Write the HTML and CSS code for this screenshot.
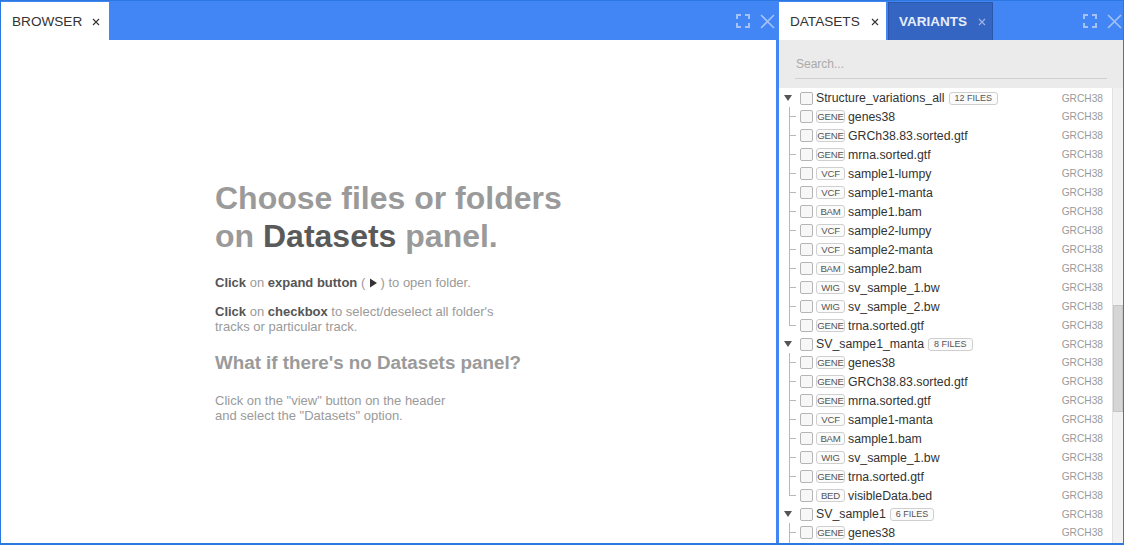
FILE: index.html
```html
<!DOCTYPE html>
<html>
<head>
<meta charset="utf-8">
<link rel="stylesheet" href="styles.css">
</head>
<body>
<div class="app">
  <section class="panel panel-left">
    <header class="bar">
      <div class="tab active">BROWSER<svg class="tx" viewBox="0 0 8 8"><path d="M1 1L7 7M7 1L1 7"/></svg></div>
      <div class="tools">
        <svg class="ico" viewBox="0 0 14 14"><path d="M1 5V1H5M9 1H13V5M13 9V13H9M5 13H1V9"/></svg>
        <svg class="ico close" viewBox="0 0 15 15"><path d="M1 1L14 14M14 1L1 14"/></svg>
      </div>
    </header>
    <div class="browser-body">
      <div class="help">
        <h1>Choose files or folders<br>on <b>Datasets</b> panel.</h1>
        <p><b>Click</b> on <b>expand button</b> ( <svg class="play" viewBox="0 0 8 10"><path d="M1 0.5L8 5L1 9.5Z"/></svg> ) to open folder.</p>
        <p><b>Click</b> on <b>checkbox</b> to select/deselect all folder's<br>tracks or particular track.</p>
        <h2>What if there's no Datasets panel?</h2>
        <p>Click on the "view" button on the header<br>and select the "Datasets" option.</p>
      </div>
    </div>
  </section>
  <section class="panel panel-right">
    <header class="bar">
      <div class="tab active">DATASETS<svg class="tx" viewBox="0 0 8 8"><path d="M1 1L7 7M7 1L1 7"/></svg></div>
      <div class="tab dark">VARIANTS<svg class="tx" viewBox="0 0 8 8"><path d="M1 1L7 7M7 1L1 7"/></svg></div>
      <div class="tools">
        <svg class="ico" viewBox="0 0 14 14"><path d="M1 5V1H5M9 1H13V5M13 9V13H9M5 13H1V9"/></svg>
        <svg class="ico close" viewBox="0 0 15 15"><path d="M1 1L14 14M14 1L1 14"/></svg>
      </div>
    </header>
    <div class="search"><div class="search-input">Search...</div></div>
    <div class="list-wrap">
      <div class="tree">
        <div class="row folder"><svg class="caret" viewBox="0 0 8 6"><path d="M0 0H8L4 6Z"/></svg><span class="cb"></span><span class="name">Structure_variations_all</span><span class="count">12 FILES</span><span class="ref">GRCH38</span></div>
        <div class="row file"><span class="branch"></span><span class="cb"></span><span class="tag">GENE</span><span class="name">genes38</span><span class="ref">GRCH38</span></div>
        <div class="row file"><span class="branch"></span><span class="cb"></span><span class="tag">GENE</span><span class="name">GRCh38.83.sorted.gtf</span><span class="ref">GRCH38</span></div>
        <div class="row file"><span class="branch"></span><span class="cb"></span><span class="tag">GENE</span><span class="name">mrna.sorted.gtf</span><span class="ref">GRCH38</span></div>
        <div class="row file"><span class="branch"></span><span class="cb"></span><span class="tag">VCF</span><span class="name">sample1-lumpy</span><span class="ref">GRCH38</span></div>
        <div class="row file"><span class="branch"></span><span class="cb"></span><span class="tag">VCF</span><span class="name">sample1-manta</span><span class="ref">GRCH38</span></div>
        <div class="row file"><span class="branch"></span><span class="cb"></span><span class="tag">BAM</span><span class="name">sample1.bam</span><span class="ref">GRCH38</span></div>
        <div class="row file"><span class="branch"></span><span class="cb"></span><span class="tag">VCF</span><span class="name">sample2-lumpy</span><span class="ref">GRCH38</span></div>
        <div class="row file"><span class="branch"></span><span class="cb"></span><span class="tag">VCF</span><span class="name">sample2-manta</span><span class="ref">GRCH38</span></div>
        <div class="row file"><span class="branch"></span><span class="cb"></span><span class="tag">BAM</span><span class="name">sample2.bam</span><span class="ref">GRCH38</span></div>
        <div class="row file"><span class="branch"></span><span class="cb"></span><span class="tag">WIG</span><span class="name">sv_sample_1.bw</span><span class="ref">GRCH38</span></div>
        <div class="row file"><span class="branch"></span><span class="cb"></span><span class="tag">WIG</span><span class="name">sv_sample_2.bw</span><span class="ref">GRCH38</span></div>
        <div class="row file last"><span class="branch"></span><span class="cb"></span><span class="tag">GENE</span><span class="name">trna.sorted.gtf</span><span class="ref">GRCH38</span></div>
        <div class="row folder"><svg class="caret" viewBox="0 0 8 6"><path d="M0 0H8L4 6Z"/></svg><span class="cb"></span><span class="name">SV_sampe1_manta</span><span class="count">8 FILES</span><span class="ref">GRCH38</span></div>
        <div class="row file"><span class="branch"></span><span class="cb"></span><span class="tag">GENE</span><span class="name">genes38</span><span class="ref">GRCH38</span></div>
        <div class="row file"><span class="branch"></span><span class="cb"></span><span class="tag">GENE</span><span class="name">GRCh38.83.sorted.gtf</span><span class="ref">GRCH38</span></div>
        <div class="row file"><span class="branch"></span><span class="cb"></span><span class="tag">GENE</span><span class="name">mrna.sorted.gtf</span><span class="ref">GRCH38</span></div>
        <div class="row file"><span class="branch"></span><span class="cb"></span><span class="tag">VCF</span><span class="name">sample1-manta</span><span class="ref">GRCH38</span></div>
        <div class="row file"><span class="branch"></span><span class="cb"></span><span class="tag">BAM</span><span class="name">sample1.bam</span><span class="ref">GRCH38</span></div>
        <div class="row file"><span class="branch"></span><span class="cb"></span><span class="tag">WIG</span><span class="name">sv_sample_1.bw</span><span class="ref">GRCH38</span></div>
        <div class="row file"><span class="branch"></span><span class="cb"></span><span class="tag">GENE</span><span class="name">trna.sorted.gtf</span><span class="ref">GRCH38</span></div>
        <div class="row file last"><span class="branch"></span><span class="cb"></span><span class="tag">BED</span><span class="name">visibleData.bed</span><span class="ref">GRCH38</span></div>
        <div class="row folder"><svg class="caret" viewBox="0 0 8 6"><path d="M0 0H8L4 6Z"/></svg><span class="cb"></span><span class="name">SV_sample1</span><span class="count">6 FILES</span><span class="ref">GRCH38</span></div>
        <div class="row file"><span class="branch"></span><span class="cb"></span><span class="tag">GENE</span><span class="name">genes38</span><span class="ref">GRCH38</span></div>
        <div class="row file stub"><span class="branch"></span></div>
      </div>
      <div class="scrollbar"><div class="thumb"></div></div>
    </div>
  </section>
</div>
</body>
</html>
```
FILE: styles.css
```css
* { box-sizing: border-box; }
html, body { margin: 0; padding: 0; }
body {
  font-family: "Liberation Sans", Arial, sans-serif;
  width: 1124px;
  height: 545px;
  overflow: hidden;
}
.app {
  width: 1124px;
  height: 545px;
  display: flex;
  gap: 3px;
  background: #4285f4;
  border: 1px solid #2a78e0;
  border-bottom-width: 2px;
}
.panel {
  display: flex;
  flex-direction: column;
  min-height: 0;
  overflow: hidden;
}
.panel-left { width: 775px; background: #fff; }
.panel-right { flex: 1; background: #fff; }

.bar {
  height: 39px;
  flex: none;
  background: #4285f4;
  display: flex;
  align-items: flex-end;
  gap: 2px;
}
.tab {
  height: 38px;
  display: flex;
  align-items: center;
  padding: 0 0 0 11px;
  font-size: 13.6px;
  color: #333;
  white-space: nowrap;
}
.tab.active { background: #fff; }
.panel-left .tab { width: 108px; }
.panel-right .tab.active { width: 107px; }
.tab.dark {
  width: 105px;
  background: #3565c2;
  border: 1px solid #2c56a8;
  border-bottom: none;
  color: #e6edfb;
  font-weight: bold;
  font-size: 13.5px;
  padding-left: 10px;
}
.tx {
  width: 8px;
  height: 8px;
  margin-left: 10px;
  margin-top: 1px;
  flex: none;
  fill: none;
  stroke: #333;
  stroke-width: 1.1;
}
.panel-right .tab.active .tx { margin-left: 11px; }
.tab.dark .tx { stroke: #9fb6e3; margin-left: 11px; }
.tools {
  margin-left: auto;
  align-self: stretch;
  display: flex;
  align-items: center;
  gap: 10px;
  padding-right: 1px;
  padding-top: 1px;
}
.ico {
  width: 14px;
  height: 14px;
  fill: none;
  stroke: #a5c2f6;
  stroke-width: 2;
}
.ico.close { width: 15px; height: 15px; stroke-width: 1.6; }

/* browser body */
.browser-body {
  flex: 1;
  display: flex;
  justify-content: center;
  padding-top: 139px;
}
.help { width: 347px; color: #9a9a9a; }
.help b { color: #555; }
.help h1 {
  margin: 0 0 20px 0;
  font-size: 32px;
  line-height: 38px;
  font-weight: bold;
  color: #9a9a9a;
  white-space: nowrap;
}
.help h1 b { color: #5a5a5a; }
.help p {
  margin: 0 0 14px 0;
  font-size: 13px;
  line-height: 15px;
  white-space: nowrap;
}
.help h2 {
  margin: 18px 0 19px 0;
  font-size: 18.8px;
  line-height: 22px;
  color: #9a9a9a;
  white-space: nowrap;
}
.play { width: 8px; height: 10px; fill: #333; vertical-align: -1px; }

/* search */
.search {
  flex: none;
  height: 48px;
  background: #ebebeb;
  padding: 15px 16px 0 16px;
}
.search-input {
  height: 24px;
  border-bottom: 1px solid #cfcfcf;
  font-size: 12px;
  color: #aaa;
  padding: 2px 1px 0;
}

/* tree list */
.list-wrap {
  flex: 1;
  min-height: 0;
  display: flex;
  overflow: hidden;
}
.tree { flex: 1; min-width: 0; padding-top: 1px; }
.row {
  height: 19px;
  display: flex;
  align-items: center;
  padding-left: 4px;
  padding-right: 9px;
  font-size: 12.3px;
  color: #333;
  white-space: nowrap;
}
.row.folder { height: 18px; }
.caret {
  width: 8px;
  height: 6px;
  margin-left: 1px;
  margin-right: 8px;
  margin-top: -1px;
  fill: #555;
  flex: none;
}
.branch {
  position: relative;
  width: 17px;
  align-self: stretch;
  flex: none;
}
.branch::before {
  content: "";
  position: absolute;
  left: 6px;
  top: 0;
  bottom: 0;
  border-left: 1px solid #b8b8b8;
}
.row.last .branch::before { bottom: 9px; }
.branch::after {
  content: "";
  position: absolute;
  left: 6px;
  width: 7px;
  top: 9px;
  border-top: 1px solid #b8b8b8;
}
.cb {
  width: 13px;
  height: 13px;
  border: 1px solid #b5b5b5;
  border-radius: 2px;
  background: #f7f7f7;
  margin-right: 3px;
  flex: none;
}
.tag {
  width: 29px;
  height: 13px;
  border: 1px solid #cfcfcf;
  border-radius: 3px;
  font-size: 9.6px;
  line-height: 11px;
  letter-spacing: -0.2px;
  text-align: center;
  color: #555;
  background: #fbfbfb;
  margin-right: 3px;
  flex: none;
}
.count {
  margin-left: 4px;
  height: 13px;
  padding: 0 5px;
  border: 1px solid #cfcfcf;
  border-radius: 3px;
  font-size: 9px;
  line-height: 11px;
  color: #555;
  background: #fbfbfb;
}
.ref {
  margin-left: auto;
  font-size: 10.2px;
  color: #9a9a9a;
}
.scrollbar {
  width: 11px;
  flex: none;
  background: #f1f1f1;
  border-left: 1px solid #e2e2e2;
  padding-top: 217px;
}
.thumb {
  height: 107px;
  background: #d5d5d5;
  border: 1px solid #c6c6c6;
}
```
